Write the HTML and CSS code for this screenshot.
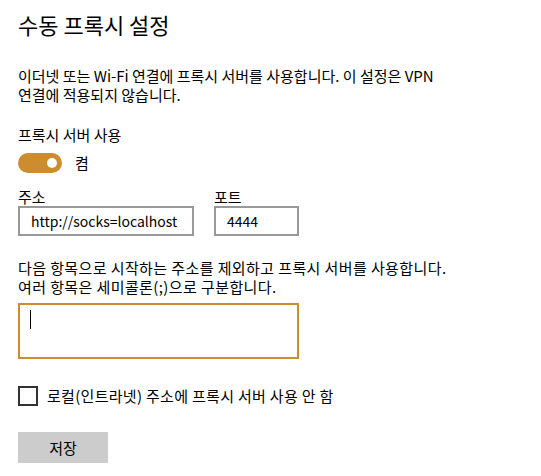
FILE: index.html
```html
<html>
<head>
    <title>수동 프록시 설정</title>
    <link rel="stylesheet" href="styles.css">
</head>
<body>
    <div class="page">
        <h2 class="title">수동 프록시 설정</h2>
        <p class="desc">이더넷 또는 Wi-Fi 연결에 프록시 서버를 사용합니다. 이 설정은 VPN<br>연결에 적용되지 않습니다.</p>

        <div class="label">프록시 서버 사용</div>
        <div class="toggle-row">
            <span class="toggle"><span class="knob"></span></span>
            <span class="toggle-text">켬</span>
        </div>

        <div class="fields">
            <div class="field">
                <div class="field-label">주소</div>
                <input type="text" class="box box-address" value="http://socks=localhost">
            </div>
            <div class="field">
                <div class="field-label">포트</div>
                <input type="text" class="box box-port" value="4444">
            </div>
        </div>

        <p class="desc desc-except">다음 항목으로 시작하는 주소를 제외하고 프록시 서버를 사용합니다.<br>여러 항목은 세미콜론(;)으로 구분합니다.</p>
        <div class="textarea"><span class="caret"></span></div>

        <div class="check-row">
            <span class="checkbox"></span>
            <span class="check-text">로컬(인트라넷) 주소에 프록시 서버 사용 안 함</span>
        </div>

        <button class="save">저장</button>
    </div>
</body>
</html>
```

FILE: styles.css
```css
body {
    margin: 0;
    background-color: #fff;
    color: #000;
    font-family: "Segoe UI", "Noto Sans CJK KR", sans-serif;
    font-size: 15px;
}

.page {
    padding: 9px 18px;
}

.title {
    font-size: 22px;
    font-weight: normal;
    margin: 0 0 27px 0;
    line-height: 30px;
}

.desc {
    margin: 0;
    line-height: 19px;
}

.label {
    margin-top: 21px;
    line-height: 20px;
}

.toggle-row {
    display: flex;
    align-items: center;
    gap: 13px;
    margin-top: 7px;
}

.toggle {
    display: flex;
    align-items: center;
    justify-content: flex-end;
    width: 44px;
    height: 20px;
    border-radius: 10px;
    background-color: #cd8c2e;
    padding-right: 5px;
    box-sizing: border-box;
}

.knob {
    width: 10px;
    height: 10px;
    border-radius: 50%;
    background-color: #fff;
}

.fields {
    display: flex;
    gap: 20px;
    margin-top: 15px;
}

.field-label {
    line-height: 18px;
}

.box {
    font-family: inherit;
    font-size: 14px;
    height: 30px;
    padding: 0 8px 0 11px;
    border: 2px solid #999;
    box-sizing: border-box;
    outline: none;
}

.box-address {
    width: 176px;
}

.box-port {
    width: 85px;
}

.desc-except {
    margin-top: 22px;
    letter-spacing: 0.4px;
}

.textarea {
    width: 281px;
    height: 56px;
    border: 2px solid #cd8c2e;
    box-sizing: border-box;
    margin-top: 7px;
    padding: 5px 10px;
}

.caret {
    display: block;
    width: 1px;
    height: 19px;
    background-color: #000;
}

.check-row {
    display: flex;
    align-items: center;
    gap: 9px;
    margin-top: 26px;
}

.check-text {
    letter-spacing: 0.3px;
}

.checkbox {
    width: 20px;
    height: 20px;
    border: 2px solid #333;
    box-sizing: border-box;
}

.save {
    display: block;
    width: 90px;
    height: 31px;
    margin-top: 26px;
    border: none;
    background-color: #ccc;
    font-family: inherit;
    font-size: 15px;
    color: #000;
}
```
